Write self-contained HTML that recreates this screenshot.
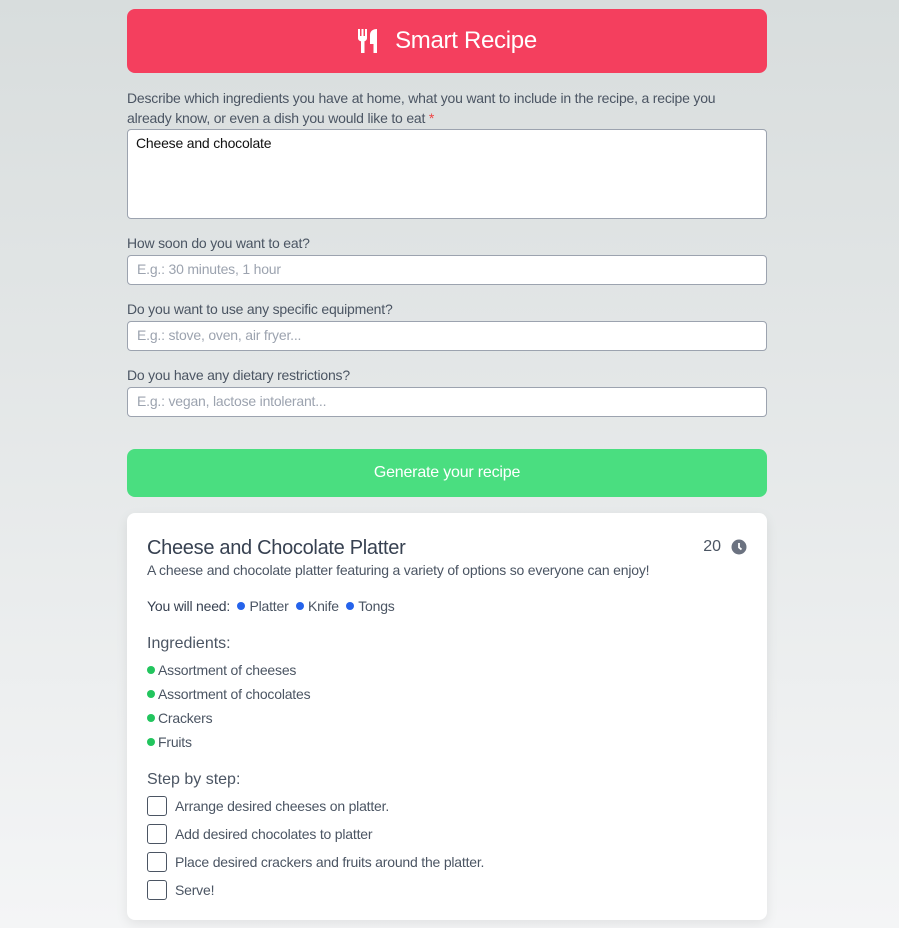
<!DOCTYPE html>
<html><head><meta charset="utf-8"><style>
*{box-sizing:border-box;margin:0;padding:0}
body{width:899px;height:928px;overflow:hidden;font-family:"Liberation Sans",sans-serif;background:linear-gradient(#d8dddd,#f4f5f6);position:relative;color:#4b5563}
.abs{position:absolute}
.hdr{left:127px;top:9px;width:640px;height:64px;background:#f43f5e;border-radius:8px;color:#fff;font-size:24px;display:flex;align-items:center;justify-content:center;letter-spacing:-0.3px}
.lbl{left:127px;font-size:14px;color:#4b5563;letter-spacing:-0.2px}
.inp{left:127px;width:640px;height:30px;background:#fff;border:1px solid #9ca3af;border-radius:4px;font-size:14px;color:#9ca3af;padding:5px 9px;letter-spacing:-0.2px}
.btn{left:127px;top:449px;width:640px;height:48px;background:#4ade80;border-radius:8px;color:#fff;font-size:16px;display:flex;align-items:center;justify-content:center;letter-spacing:-0.2px}
.card{left:127px;top:513px;width:640px;height:407px;background:#fff;border-radius:8px;box-shadow:0 4px 12px rgba(0,0,0,.08)}
.t{font-size:14px;letter-spacing:-0.2px}
.dot{display:inline-block;width:8px;height:8px;border-radius:50%;margin-right:4px;vertical-align:1px}
.cb{position:absolute;left:20px;width:20px;height:20px;border:1px solid #4b5563;border-radius:3px}
</style></head><body>
<div class="abs hdr"><svg width="22" height="26" viewBox="0 0 22 26" style="margin-right:16px" fill="#fff"><path d="M1 1h2v7h1.5V1h2v7H8V1h2v9c0 2-1.5 3-2.5 3.3V25H4V13.3C2.5 13 1 12 1 10z"/><path d="M20 1v24h-3.5v-9H13V7c0-4 3-6 7-6z"/></svg>Smart Recipe</div>
<div class="abs lbl" style="top:88px;line-height:20px;width:600px">Describe which ingredients you have at home, what you want to include in the recipe, a recipe you already know, or even a dish you would like to eat <span style="color:#ef4444">*</span></div>
<div class="abs inp" style="top:129px;height:90px;color:#111;padding-left:8px">Cheese and chocolate</div>
<div class="abs lbl" style="top:235px">How soon do you want to eat?</div>
<div class="abs inp" style="top:255px">E.g.: 30 minutes, 1 hour</div>
<div class="abs lbl" style="top:301px">Do you want to use any specific equipment?</div>
<div class="abs inp" style="top:321px">E.g.: stove, oven, air fryer...</div>
<div class="abs lbl" style="top:367px">Do you have any dietary restrictions?</div>
<div class="abs inp" style="top:387px">E.g.: vegan, lactose intolerant...</div>
<div class="abs btn">Generate your recipe</div>
<div class="abs card">
<div class="abs" style="left:20px;top:24px;font-size:20px;color:#374151;letter-spacing:-0.3px">Cheese and Chocolate Platter</div>
<div class="abs" style="right:20px;top:25px;font-size:16px;display:flex;align-items:center">20<svg width="16" height="16" viewBox="0 0 16 16" style="margin-left:10px"><circle cx="8" cy="8" r="7.5" fill="#6b7280"/><path d="M8 4v4.5l2.5 2" stroke="#fff" stroke-width="1.8" fill="none"/></svg></div>
<div class="abs t" style="left:20px;top:49px">A cheese and chocolate platter featuring a variety of options so everyone can enjoy!</div>
<div class="abs t" style="left:20px;top:85px"><span style="color:#374151">You will need:</span>&nbsp; <span class="dot" style="background:#2563eb"></span>Platter&nbsp; <span class="dot" style="background:#2563eb"></span>Knife&nbsp; <span class="dot" style="background:#2563eb"></span>Tongs</div>
<div class="abs" style="left:20px;top:122px;font-size:16px">Ingredients:</div>
<div class="abs t" style="left:20px;top:149px"><span class="dot" style="background:#22c55e;margin-right:3px"></span>Assortment of cheeses</div>
<div class="abs t" style="left:20px;top:173px"><span class="dot" style="background:#22c55e;margin-right:3px"></span>Assortment of chocolates</div>
<div class="abs t" style="left:20px;top:197px"><span class="dot" style="background:#22c55e;margin-right:3px"></span>Crackers</div>
<div class="abs t" style="left:20px;top:221px"><span class="dot" style="background:#22c55e;margin-right:3px"></span>Fruits</div>
<div class="abs" style="left:20px;top:258px;font-size:16px">Step by step:</div>
<div class="cb" style="top:283px"></div><div class="abs t" style="left:48px;top:285px">Arrange desired cheeses on platter.</div>
<div class="cb" style="top:311px"></div><div class="abs t" style="left:48px;top:313px">Add desired chocolates to platter</div>
<div class="cb" style="top:339px"></div><div class="abs t" style="left:48px;top:341px">Place desired crackers and fruits around the platter.</div>
<div class="cb" style="top:367px"></div><div class="abs t" style="left:48px;top:369px">Serve!</div>
</div>
</body></html>
